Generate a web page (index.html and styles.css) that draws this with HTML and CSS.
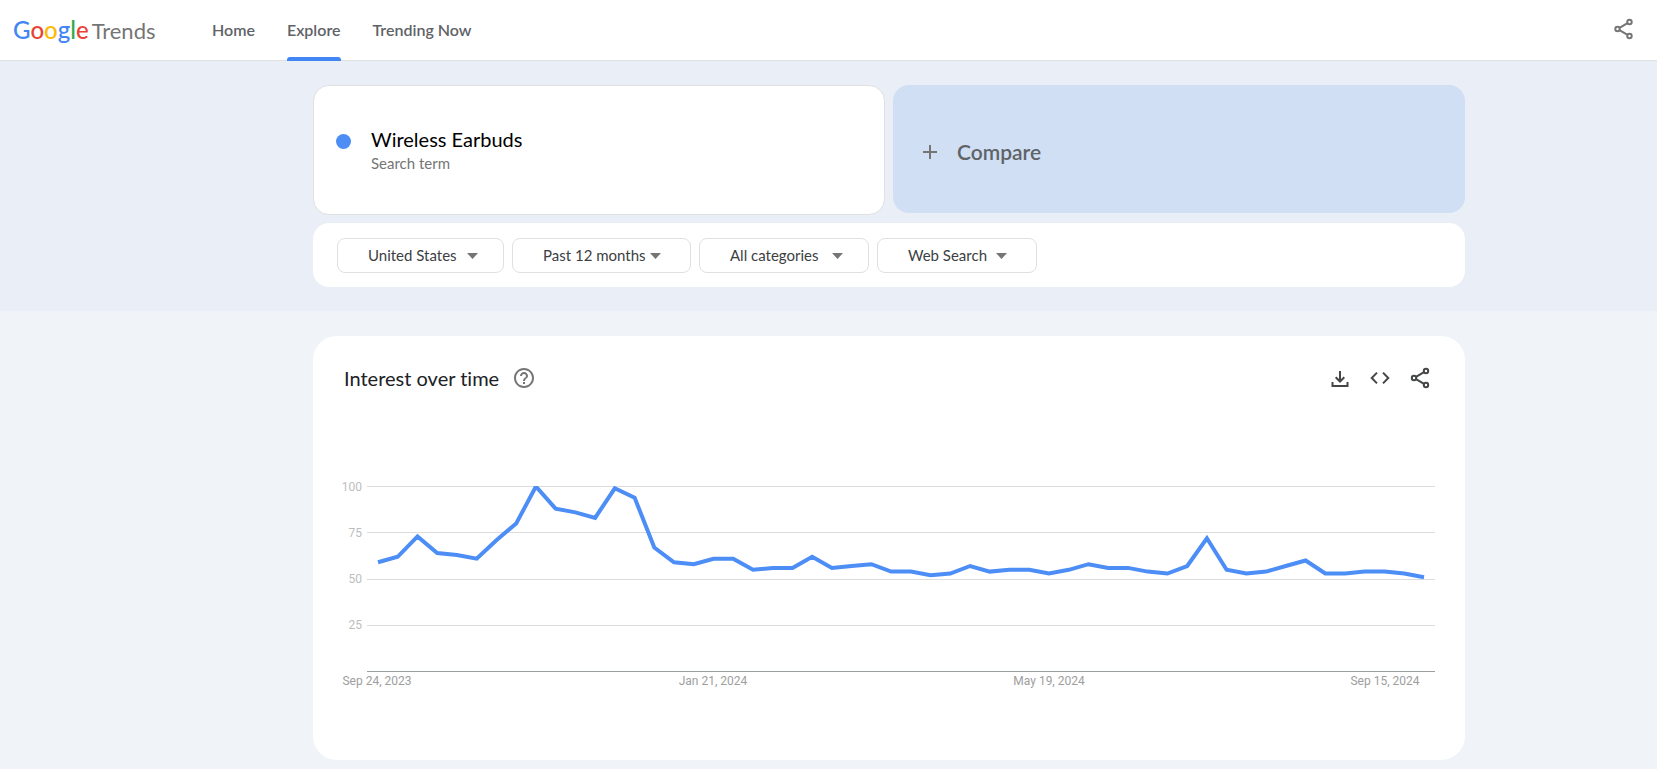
FILE: index.html
```html
<!DOCTYPE html>
<html lang="en">
<head>
<meta charset="utf-8">
<meta name="viewport" content="width=device-width, initial-scale=1">
<title>Wireless Earbuds - Explore - Google Trends</title>
<link rel="stylesheet" href="styles.css">
</head>
<body>
<header class="topbar">
  <a class="logo" href="#"><span class="logo-google"><span class="blue">G</span><span class="red">o</span><span class="yellow">o</span><span class="blue">g</span><span class="green">l</span><span class="red">e</span></span><span class="logo-product">Trends</span></a>
  <nav class="nav">
    <a class="nav-link" href="#">Home</a>
    <a class="nav-link active" href="#" aria-current="page">Explore</a>
    <a class="nav-link" href="#">Trending Now</a>
  </nav>
  <button class="icon-button share-page" type="button" aria-label="Share page">
    <svg viewBox="0 0 24 24"><g fill="none" stroke="currentColor" stroke-width="2"><circle cx="5.500" cy="12" r="2.200"/><circle cx="17.500" cy="5" r="2.200"/><circle cx="17.500" cy="19" r="2.200"/><path d="M7.500 10.900 15.500 6.100M7.500 13.100l8 4.800"/></g></svg>
  </button>
</header>

<section class="hero">
  <div class="terms">
    <div class="term-card">
      <span class="term-dot"></span>
      <div class="term-text">
        <div class="term-name">Wireless Earbuds</div>
        <div class="term-type">Search term</div>
      </div>
    </div>
    <button class="compare" type="button">
      <svg class="plus" viewBox="0 0 14 14"><path d="M0 7h14M7 0v14" stroke="currentColor" stroke-width="2"/></svg>
      <span>Compare</span>
    </button>
  </div>
  <div class="filters">
    <div class="filter region">
      <select aria-label="Region"><option>United States</option></select>
      <svg class="arrow" viewBox="0 0 11 6"><path d="M0 0h11L5.500 6z" fill="currentColor"/></svg>
    </div>
    <div class="filter period">
      <select aria-label="Time range"><option>Past 12 months</option></select>
      <svg class="arrow" viewBox="0 0 11 6"><path d="M0 0h11L5.500 6z" fill="currentColor"/></svg>
    </div>
    <div class="filter category">
      <select aria-label="Category"><option>All categories</option></select>
      <svg class="arrow" viewBox="0 0 11 6"><path d="M0 0h11L5.500 6z" fill="currentColor"/></svg>
    </div>
    <div class="filter source">
      <select aria-label="Search type"><option>Web Search</option></select>
      <svg class="arrow" viewBox="0 0 11 6"><path d="M0 0h11L5.500 6z" fill="currentColor"/></svg>
    </div>
  </div>
</section>

<main class="content">
  <section class="panel">
    <div class="panel-head">
      <h2 class="panel-title">Interest over time</h2>
      <button class="icon-button help" type="button" aria-label="Help">
        <svg viewBox="0 0 24 24"><path fill="currentColor" d="M11 18h2v-2h-2v2zm1-16C6.480 2 2 6.480 2 12s4.480 10 10 10 10-4.480 10-10S17.520 2 12 2zm0 18c-4.410 0-8-3.590-8-8s3.590-8 8-8 8 3.590 8 8-3.590 8-8 8zm0-14c-2.210 0-4 1.790-4 4h2c0-1.100.9-2 2-2s2 .9 2 2c0 2-3 1.750-3 5h2c0-2.250 3-2.500 3-5 0-2.210-1.790-4-4-4z"/></svg>
      </button>
      <div class="actions">
        <button class="icon-button" type="button" aria-label="Download CSV">
          <svg viewBox="0 0 24 24"><path fill="none" stroke="currentColor" stroke-width="2" d="M12 5v10M7.700 11.200l4.300 4.300 4.300-4.300M4.500 16v4h15v-4"/></svg>
        </button>
        <button class="icon-button" type="button" aria-label="Embed">
          <svg viewBox="0 0 24 24"><path fill="none" stroke="currentColor" stroke-width="2" d="M9 6.600 3.700 12 9 17.400M15 6.600l5.300 5.400-5.300 5.400"/></svg>
        </button>
        <button class="icon-button" type="button" aria-label="Share">
          <svg viewBox="0 0 24 24"><g fill="none" stroke="currentColor" stroke-width="2"><circle cx="6" cy="12" r="2.200"/><circle cx="18" cy="5" r="2.200"/><circle cx="18" cy="19" r="2.200"/><path d="M8 10.900 16 6.100M8 13.100l8 4.800"/></g></svg>
        </button>
      </div>
    </div>
    <svg class="chart" viewBox="0 0 1100 220" role="img" aria-label="Interest over time for Wireless Earbuds">
      <defs><clipPath id="plot"><rect x="26" y="10" width="1068" height="186"/></clipPath></defs>
      <g class="grid">
        <path d="M26 10.500h1068M26 56.500h1068M26 103.500h1068M26 149.500h1068"/>
        <path class="baseline" d="M26 195.500h1068"/>
      </g>
      <g class="y-labels">
        <text x="21" y="15">100</text>
        <text x="21" y="61">75</text>
        <text x="21" y="107">50</text>
        <text x="21" y="153">25</text>
      </g>
      <g class="x-labels">
        <text x="36" y="209">Sep 24, 2023</text>
        <text x="372" y="209">Jan 21, 2024</text>
        <text x="708" y="209">May 19, 2024</text>
        <text x="1044" y="209">Sep 15, 2024</text>
      </g>
      <g clip-path="url(#plot)"><polyline id="series" class="series"/></g>
    </svg>
  </section>
</main>
<script src="chart.js"></script>
</body>
</html>
```
FILE: styles.css
```css
* { box-sizing: border-box; }

body {
  margin: 0;
  min-height: 100vh;
  background: #f0f4f9;
  color: #202124;
  font-family: Lato, "Open Sans", sans-serif;
  font-variant-ligatures: none;
}

button, select { font-family: inherit; }

.topbar {
  display: flex;
  align-items: center;
  height: 61px;
  padding: 0 21px 2px 13px;
  background: #fff;
  border-bottom: 1px solid #e0e0e0;
}

.logo {
  display: flex;
  align-items: baseline;
  gap: 3px;
  width: 199px;
  text-decoration: none;
}
.logo-google { font-size: 24px; font-weight: 500; }
.logo-product { font-size: 22px; color: #757575; }
.blue { color: #4285f4; }
.red { color: #ea4335; }
.yellow { color: #fbbc05; }
.green { color: #34a853; }

.nav {
  display: flex;
  align-self: stretch;
  gap: 32px;
}
.nav-link {
  display: flex;
  align-items: center;
  color: #5f6368;
  font-size: 16px;
  font-weight: 600;
  text-decoration: none;
}
.nav-link.active { position: relative; }
.nav-link.active::after {
  content: "";
  position: absolute;
  left: 0;
  right: 0;
  bottom: -3px;
  height: 4px;
  border-radius: 3px 3px 0 0;
  background: #4285f4;
}

.icon-button {
  display: block;
  width: 24px;
  height: 24px;
  padding: 0;
  border: 0;
  background: none;
  color: #444746;
}
.icon-button svg { display: block; width: 24px; height: 24px; }
.share-page { margin-left: auto; color: #757575; }

.hero {
  padding: 24px 192px 24px 313px;
  background: #e9eef7;
}

.terms {
  display: grid;
  grid-template-columns: 1fr 1fr;
  align-items: start;
  gap: 8px;
}
.term-card {
  display: flex;
  gap: 20px;
  height: 130px;
  padding: 40px 22px;
  border: 1px solid #e0e0e0;
  border-radius: 16px;
  background: #fff;
}
.term-dot {
  width: 15px;
  height: 15px;
  margin-top: 8px;
  border-radius: 50%;
  background: #4c8df6;
}
.term-name { color: #000; font-size: 20px; line-height: 27px; }
.term-type { color: #757575; font-size: 15px; line-height: 20px; }

.compare {
  display: flex;
  align-items: center;
  gap: 20px;
  height: 128px;
  padding: 5px 30px 0;
  border: 0;
  border-radius: 16px;
  background: #d0dff3;
  color: #5f6368;
  font-size: 21px;
  font-weight: 600;
}
.plus { width: 14px; height: 14px; color: #757575; }

.filters {
  display: flex;
  gap: 8px;
  margin-top: 8px;
  padding: 15px 24px 14px;
  border-radius: 16px;
  background: #fff;
}
.filter { position: relative; color: #757575; }
.filter select {
  appearance: none;
  display: block;
  width: 100%;
  height: 35px;
  padding: 0 0 1px 30px;
  border: 1px solid #e0e0e0;
  border-radius: 8px;
  background: #fff;
  color: #3c4043;
  font-size: 15px;
}
.arrow {
  position: absolute;
  top: 15px;
  right: 26px;
  width: 11px;
  height: 6px;
  pointer-events: none;
}
.region { width: 167px; }
.period { width: 179px; }
.category { width: 170px; }
.source { width: 160px; }
.period .arrow, .source .arrow { right: 30px; }

.content { padding: 25px 192px 9px 313px; }
.panel {
  padding: 28px 24px 64px 28px;
  border-radius: 24px;
  background: #fff;
}
.panel-head {
  display: flex;
  align-items: center;
  padding: 0 9px 0 3px;
}
.panel-title {
  margin: 0;
  font-size: 20px;
  font-weight: 400;
  line-height: 28px;
}
.help { margin-left: 13px; color: #757575; }
.actions { display: flex; gap: 16px; margin-left: auto; }

.chart {
  display: block;
  width: 100%;
  margin-top: 84px;
  font-family: Roboto, sans-serif;
  font-size: 12px;
}
.grid path { fill: none; stroke: #dcdcdc; }
.grid .baseline { stroke: #9aa09a; }
.y-labels { fill: #bdbdbd; text-anchor: end; }
.x-labels { fill: #9e9e9e; text-anchor: middle; }
.series { fill: none; stroke: #4c8df6; stroke-width: 4; }
```
FILE: chart.js
```js
// Weekly interest values, starting Sep 24, 2023
const weeks = [
  59, 62, 73, 64, 63, 61, 71, 80, 100, 88, 86, 83, 99, 94, 67, 59, 58, 61,
  61, 55, 56, 56, 62, 56, 57, 58, 54, 54, 52, 53, 57, 54, 55, 55, 53, 55,
  58, 56, 56, 54, 53, 57, 72, 55, 53, 54, 57, 60, 53, 53, 54, 54, 53, 51
];
const left = 37, right = 1083, top100 = 10.5, bottom = 195.5;
const step = (right - left) / (weeks.length - 1);
document.getElementById("series").setAttribute("points", weeks
  .map((v, i) => `${(left + i * step).toFixed(1)},${(bottom - v * (bottom - top100) / 100).toFixed(1)}`)
  .join(" "));
```
